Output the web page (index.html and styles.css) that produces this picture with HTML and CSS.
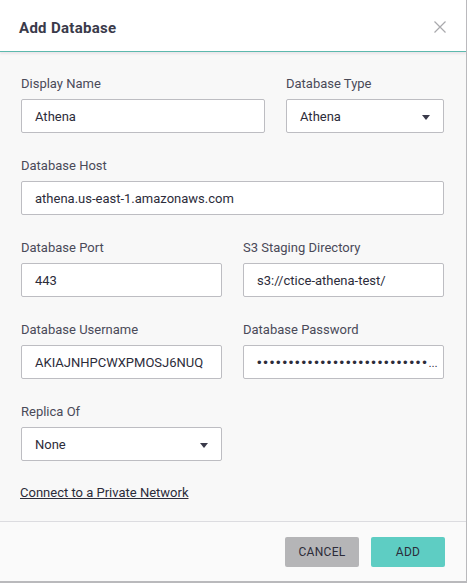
FILE: index.html
```html
<!DOCTYPE html>
<html>
<head>
<meta charset="utf-8">
<link rel="stylesheet" href="styles.css">
</head>
<body>
<div class="modal">
  <div class="header">
    <div class="title">Add Database</div>
    <svg class="close" width="12" height="12" viewBox="0 0 12 12"><path d="M0.5 0.5 L11.5 11.5 M11.5 0.5 L0.5 11.5" stroke="#a9a9ad" stroke-width="1.2" fill="none"/></svg>
  </div>
  <div class="body">
    <div class="row row-a">
      <div class="field">
        <div class="label">Display Name</div>
        <div class="input">Athena</div>
      </div>
      <div class="field">
        <div class="label">Database Type</div>
        <div class="input select">Athena<span class="caret"></span></div>
      </div>
    </div>
    <div class="row row-full">
      <div class="field">
        <div class="label">Database Host</div>
        <div class="input">athena.us-east-1.amazonaws.com</div>
      </div>
    </div>
    <div class="row row-half">
      <div class="field">
        <div class="label">Database Port</div>
        <div class="input">443</div>
      </div>
      <div class="field">
        <div class="label">S3 Staging Directory</div>
        <div class="input">s3://ctice-athena-test/</div>
      </div>
    </div>
    <div class="row row-half">
      <div class="field">
        <div class="label">Database Username</div>
        <div class="input">AKIAJNHPCWXPMOSJ6NUQ</div>
      </div>
      <div class="field">
        <div class="label">Database Password</div>
        <div class="input password">•••••••••••••••••••••••••••<span class="ell">...</span></div>
      </div>
    </div>
    <div class="row row-half">
      <div class="field">
        <div class="label">Replica Of</div>
        <div class="input select">None<span class="caret"></span></div>
      </div>
    </div>
    <a class="link" href="#">Connect to a Private Network</a>
  </div>
  <div class="footer">
    <button class="btn cancel">CANCEL</button>
    <button class="btn add">ADD</button>
  </div>
</div>
</body>
</html>
```
FILE: styles.css
```css
html, body {
  margin: 0;
  padding: 0;
  background: #ffffff;
}
body {
  font-family: Roboto, "Liberation Sans", sans-serif;
  width: 467px;
  height: 583px;
  overflow: hidden;
}
.modal {
  width: 466px;
  height: 581px;
  border-right: 1px solid #b9b9bc;
  border-bottom: 2px solid #b9b9bc;
  background: #f8f8f8;
  display: flex;
  flex-direction: column;
}
.header {
  height: 51px;
  background: #ffffff;
  border-bottom: 1px solid #5cb9ad;
  box-shadow: 0 2px 2px rgba(200, 190, 200, 0.3);
  display: flex;
  align-items: center;
  justify-content: space-between;
  padding: 0 20px 0 19px;
  flex-shrink: 0;
}
.title {
  font-size: 15px;
  font-weight: 700;
  color: #3a3a4a;
  letter-spacing: 0.3px;
  margin-top: 5px;
}
.close {
  margin-top: 3px;
}
.body {
  padding: 24px 22px 0 21px;
  display: flex;
  flex-direction: column;
  flex: 1;
}
.row {
  display: grid;
  column-gap: 21px;
  margin-bottom: 25px;
}
.row-a {
  grid-template-columns: 244px 158px;
}
.row-full {
  grid-template-columns: 1fr;
}
.row-half {
  grid-template-columns: 201px 201px;
}
.label {
  font-size: 13px;
  line-height: 16px;
  color: #4a4a58;
  margin-bottom: 7px;
}
.input {
  height: 34px;
  box-sizing: border-box;
  border: 1px solid #bdbdc2;
  border-radius: 2px;
  background: #ffffff;
  padding: 1px 13px 0;
  font-size: 13px;
  line-height: 32px;
  color: #2c2c3a;
  white-space: nowrap;
  overflow: hidden;
}
.select {
  position: relative;
}
.caret {
  position: absolute;
  right: 13px;
  top: 15px;
  width: 0;
  height: 0;
  border-left: 4px solid transparent;
  border-right: 4px solid transparent;
  border-top: 5px solid #3a3a4a;
}
.password {
  font-family: "Liberation Sans", sans-serif;
  font-size: 13px;
  padding-left: 13px;
  padding-right: 2px;
  letter-spacing: 1.8px;
}
.ell {
  letter-spacing: 0;
  font-size: 11px;
}
.link {
  font-size: 13px;
  line-height: 16px;
  color: #2c2c3a;
  text-decoration: underline;
  margin-top: -1px;
  margin-left: -1px;
  align-self: flex-start;
}
.footer {
  height: 60px;
  border-top: 1px solid #dcdce0;
  background: #fafafa;
  display: flex;
  justify-content: flex-end;
  align-items: flex-start;
  padding: 15px 21px 0 0;
  gap: 12px;
  flex-shrink: 0;
  box-sizing: border-box;
}
.btn {
  width: 74px;
  height: 30px;
  border: none;
  border-radius: 2px;
  font-family: Roboto, "Liberation Sans", sans-serif;
  font-size: 12px;
  color: #2c2c3a;
  letter-spacing: 0.3px;
  padding: 0;
}
.cancel {
  background: #b5b5b7;
}
.add {
  background: #5ecdc3;
}
```
